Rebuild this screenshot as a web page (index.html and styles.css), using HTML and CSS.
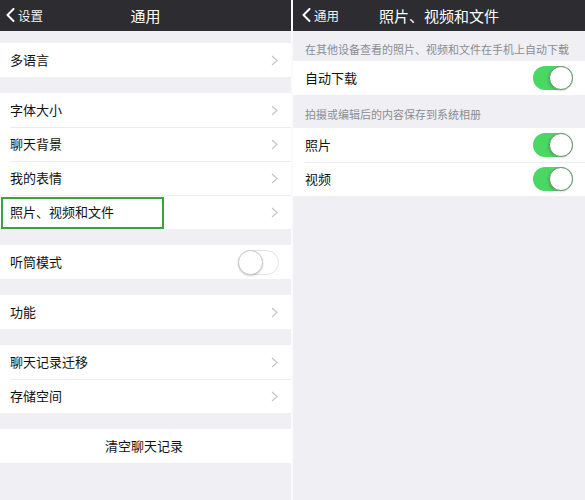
FILE: index.html
```html
<!DOCTYPE html>
<html lang="zh">
<head>
<meta charset="utf-8">
<title>通用</title>
<link rel="stylesheet" href="styles.css">
</head>
<body>
<div class="screens">
  <section class="panel left">
    <header class="nav">
      <div class="back">
        <svg class="back-icon" width="9" height="14" viewBox="0 0 9 14"><polyline points="7.5,1 1.5,7 7.5,13" fill="none" stroke="#fff" stroke-width="2" stroke-linecap="round" stroke-linejoin="round"/></svg>
        <span>设置</span>
      </div>
      <h1 class="title">通用</h1>
    </header>

    <div class="group first">
      <div class="row"><span class="label">多语言</span><svg class="chev" width="7" height="11" viewBox="0 0 7 11"><polyline points="1,1 6,5.5 1,10" fill="none" stroke="#c4c4c9" stroke-width="1.2"/></svg></div>
    </div>

    <div class="group">
      <div class="row"><span class="label">字体大小</span><svg class="chev" width="7" height="11" viewBox="0 0 7 11"><polyline points="1,1 6,5.5 1,10" fill="none" stroke="#c4c4c9" stroke-width="1.2"/></svg></div>
      <div class="row"><span class="label">聊天背景</span><svg class="chev" width="7" height="11" viewBox="0 0 7 11"><polyline points="1,1 6,5.5 1,10" fill="none" stroke="#c4c4c9" stroke-width="1.2"/></svg></div>
      <div class="row"><span class="label">我的表情</span><svg class="chev" width="7" height="11" viewBox="0 0 7 11"><polyline points="1,1 6,5.5 1,10" fill="none" stroke="#c4c4c9" stroke-width="1.2"/></svg></div>
      <div class="row highlighted"><span class="label">照片、视频和文件</span><svg class="chev" width="7" height="11" viewBox="0 0 7 11"><polyline points="1,1 6,5.5 1,10" fill="none" stroke="#c4c4c9" stroke-width="1.2"/></svg><span class="mark"></span></div>
    </div>

    <div class="group">
      <div class="row"><span class="label">听筒模式</span><span class="toggle off"><span class="knob"></span></span></div>
    </div>

    <div class="group">
      <div class="row"><span class="label">功能</span><svg class="chev" width="7" height="11" viewBox="0 0 7 11"><polyline points="1,1 6,5.5 1,10" fill="none" stroke="#c4c4c9" stroke-width="1.2"/></svg></div>
    </div>

    <div class="group">
      <div class="row"><span class="label">聊天记录迁移</span><svg class="chev" width="7" height="11" viewBox="0 0 7 11"><polyline points="1,1 6,5.5 1,10" fill="none" stroke="#c4c4c9" stroke-width="1.2"/></svg></div>
      <div class="row"><span class="label">存储空间</span><svg class="chev" width="7" height="11" viewBox="0 0 7 11"><polyline points="1,1 6,5.5 1,10" fill="none" stroke="#c4c4c9" stroke-width="1.2"/></svg></div>
    </div>

    <div class="group">
      <div class="row center"><span class="label">清空聊天记录</span></div>
    </div>
  </section>

  <section class="panel right">
    <header class="nav">
      <div class="back">
        <svg class="back-icon" width="9" height="14" viewBox="0 0 9 14"><polyline points="7.5,1 1.5,7 7.5,13" fill="none" stroke="#fff" stroke-width="2" stroke-linecap="round" stroke-linejoin="round"/></svg>
        <span>通用</span>
      </div>
      <h1 class="title">照片、视频和文件</h1>
    </header>

    <p class="caption c1">在其他设备查看的照片、视频和文件在手机上自动下载</p>
    <div class="group flush">
      <div class="row inset"><span class="label">自动下载</span><span class="toggle on"><span class="knob"></span></span></div>
    </div>

    <p class="caption c2">拍摄或编辑后的内容保存到系统相册</p>
    <div class="group flush">
      <div class="row inset"><span class="label">照片</span><span class="toggle on"><span class="knob"></span></span></div>
      <div class="row inset"><span class="label">视频</span><span class="toggle on"><span class="knob"></span></span></div>
    </div>
  </section>
</div>
</body>
</html>
```

FILE: styles.css
```css
* { box-sizing: border-box; }

html, body {
  margin: 0;
  padding: 0;
  background: #fbfbfc;
}

body {
  font-family: "Noto Sans CJK SC", "Noto Sans", sans-serif;
  color: #111;
  width: 585px;
  height: 500px;
  overflow: hidden;
}

.screens {
  display: flex;
  gap: 2px;
  height: 500px;
}

.panel {
  background: #efeff4;
  height: 500px;
  display: flex;
  flex-direction: column;
}

.panel.left { width: 291px; }
.panel.right { width: 292px; }

.nav {
  height: 31px;
  background: #2d2d31;
  color: #fff;
  position: relative;
  display: flex;
  align-items: center;
  justify-content: center;
  flex-shrink: 0;
}

.back {
  position: absolute;
  left: 6px;
  top: 0;
  height: 31px;
  display: flex;
  align-items: center;
  gap: 3px;
  font-size: 12.5px;
  color: #f2f2f2;
  padding-bottom: 1px;
}

.right .back { left: 9px; }

.title {
  margin: 0;
  font-size: 15px;
  font-weight: 400;
  line-height: 29px;
  letter-spacing: 0;
}

.group {
  background: #fff;
  margin-top: 16px;
}

.group.first { margin-top: 12px; }
.group.flush { margin-top: 0; }

.row {
  position: relative;
  height: 34px;
  display: flex;
  align-items: center;
  justify-content: space-between;
  padding: 0 13px 2px 10px;
  font-size: 13px;
}

.row + .row::before {
  content: "";
  position: absolute;
  left: 10px;
  right: 0;
  top: 0;
  height: 1px;
  background: #ececef;
}

.row.inset { padding: 0 12px 0 12px; }
.row.inset .label { margin-top: -2px; }
.row.inset + .row.inset::before { left: 12px; }

.row.center { justify-content: center; }

.label { line-height: 1; }

.chev { display: block; margin-top: 2px; }

.mark {
  position: absolute;
  left: 1px;
  top: 2px;
  width: 163px;
  height: 32px;
  border: 2px solid #37a53b;
}

.caption {
  margin: 0;
  font-size: 11px;
  line-height: 14px;
  color: #8c8c91;
  padding: 11px 12px 5px 12px;
  white-space: nowrap;
}

.caption.c2 { padding: 12px 12px 7px 12px; }

.toggle {
  position: relative;
  width: 40px;
  height: 24px;
  border-radius: 12px;
  display: block;
  flex-shrink: 0;
}

.toggle.on { background: #4bd763; }

.toggle.off {
  width: 41px;
  height: 25px;
  border-radius: 12.5px;
  background: #fff;
  border: 1px solid #e3e3e6;
  margin-right: -1px;
  margin-bottom: -2px;
}

.knob {
  position: absolute;
  top: 0;
  width: 24px;
  height: 24px;
  border-radius: 50%;
  background: #fff;
}

.toggle.on .knob {
  right: 0;
  border: 1.5px solid #6f8f76;
  box-shadow: -1px 1px 2px rgba(0,0,0,0.15);
}

.toggle.off .knob {
  left: -1px;
  top: -1px;
  width: 25px;
  height: 25px;
  border: 1px solid #c9c9cc;
  box-shadow: 0 1px 2px rgba(0,0,0,0.2);
}
```
